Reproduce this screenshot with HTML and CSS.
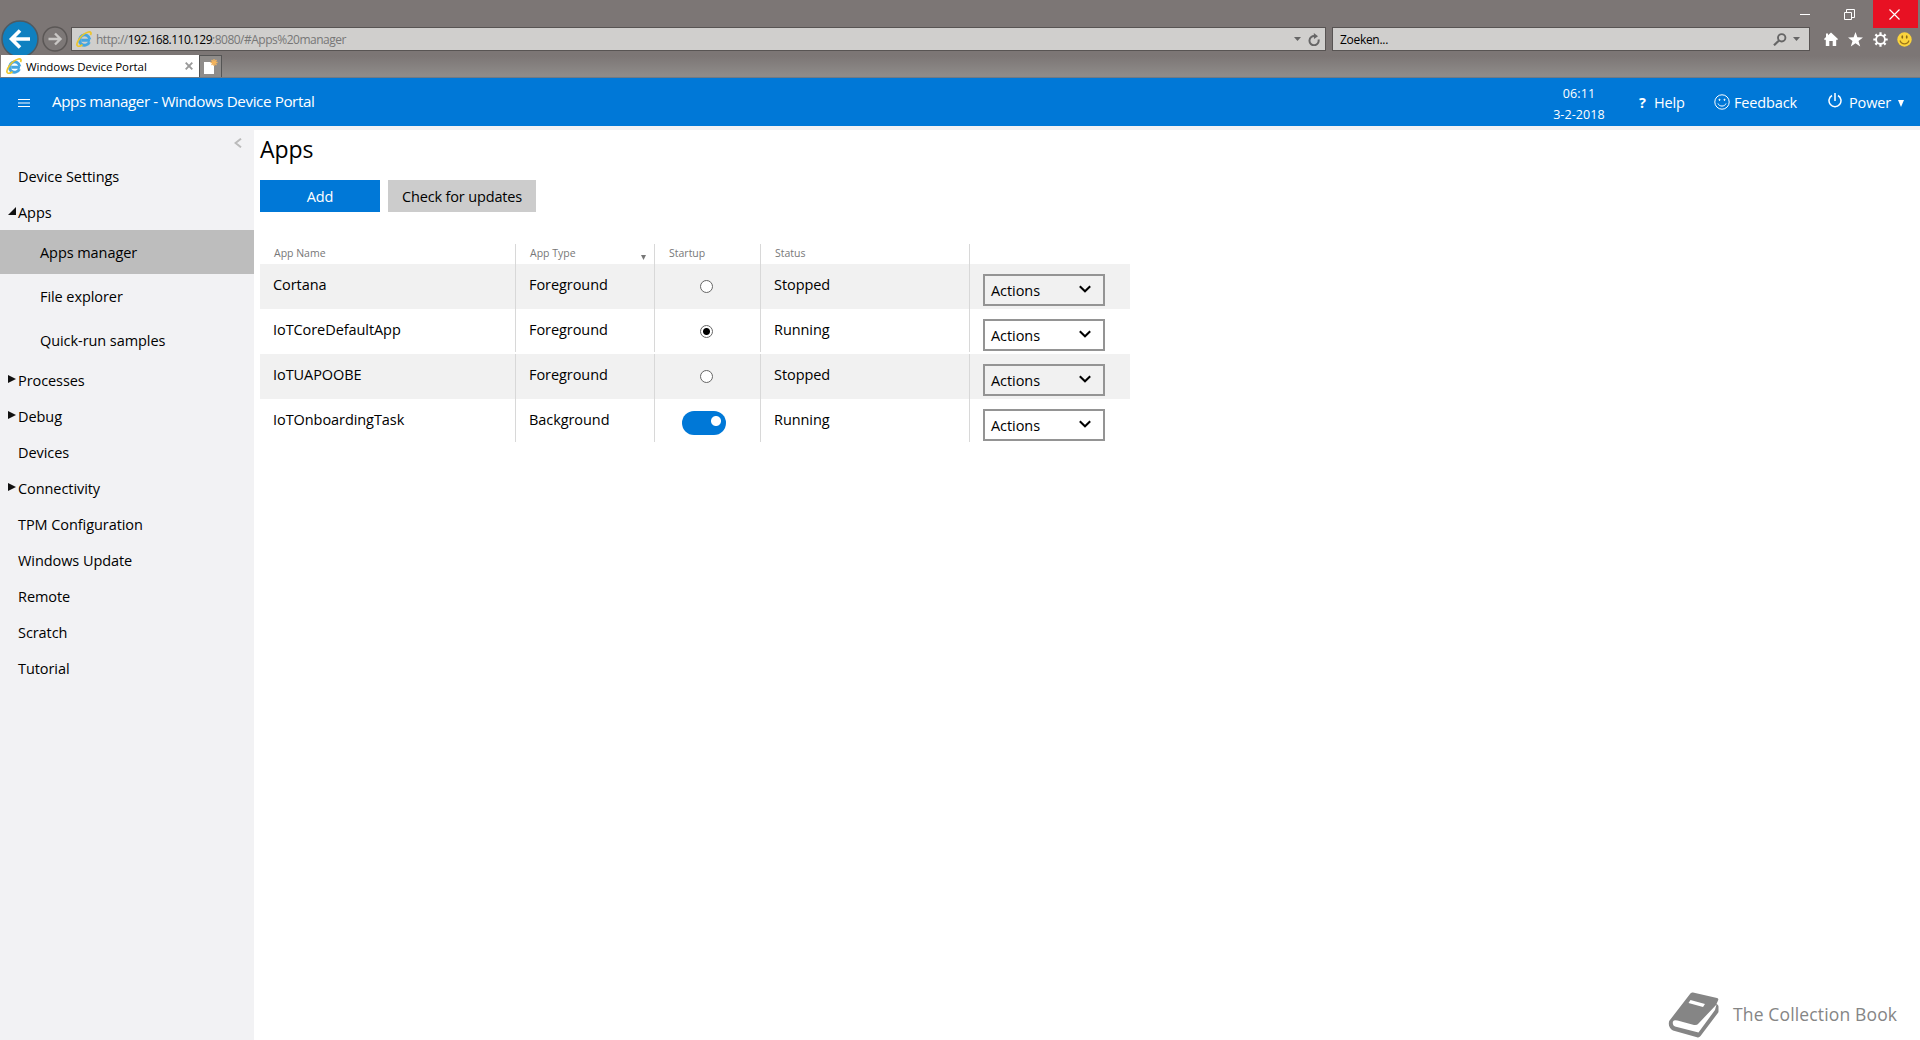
FILE: index.html
```html
<!DOCTYPE html>
<html lang="en">
<head>
  <meta charset="UTF-8">
  <title>Windows Device Portal</title>
  <link rel="stylesheet" href="styles.css">
</head>
<body>

  <!-- shared icons -->
  <svg class="defs" width="0" height="0">
    <symbol id="ie" viewBox="0 0 16 16">
      <path d="M14 9.200H5.200M13.400 11.200A5.200 5.200 0 1 1 13.800 8.400" fill="none" stroke="#45a6e0" stroke-width="2.900"/>
      <path d="M1.500 14.800C-1 12 6 2.600 12.500 1c2.600-.6 3 1.200 2 3M1.500 14.800c1.200 1 3.500.1 5-1" fill="none" stroke="#ecc52c" stroke-width="1.700"/>
    </symbol>
    <symbol id="chevron" viewBox="0 0 12 8">
      <path d="M.8 1.200L6 6.300l5.200-5.100" fill="none" stroke="#000" stroke-width="2"/>
    </symbol>
  </svg>

  <div class="browser">
    <div class="window-row">
      <div class="win-btn">
        <svg width="10" height="10"><path d="M0 5.500h10" stroke="#fff"/></svg>
      </div>
      <div class="win-btn">
        <svg width="11" height="11"><path d="M.5 3.500h7v7h-7zM2.500 3.500v-3h8v8h-3" fill="none" stroke="#fff"/></svg>
      </div>
      <div class="win-btn close">
        <svg width="11" height="11"><path d="M.5.5l10 10M10.500.5l-10 10" stroke="#fff" stroke-width="1.200"/></svg>
      </div>
    </div>

    <div class="nav-row">
      <svg class="back" width="38" height="38" viewBox="0 0 38 38">
        <circle cx="19" cy="19" r="18" fill="#0f80c0" stroke="#4e5a62" stroke-width="1.500"/>
        <path d="M29 19H11M19 10.500L10.500 19l8.500 8.500" fill="none" stroke="#fff" stroke-width="3.600"/>
      </svg>
      <svg class="forward" width="26" height="26" viewBox="0 0 26 26">
        <circle cx="13" cy="13" r="12" fill="#7d7877" stroke="#5b5756" stroke-width="1.500"/>
        <path d="M6.500 13h12M13 7.500l5.500 5.500-5.500 5.500" fill="none" stroke="#c9c7c5" stroke-width="2.400"/>
      </svg>
      <div class="address">
        <svg width="16" height="16"><use href="#ie"/></svg>
        <span class="url">http://<b>192.168.110.129</b>:8080/#Apps%20manager</span>
        <svg class="drop" width="7" height="4"><path d="M0 0h7L3.500 4z" fill="#666"/></svg>
        <svg class="reload" width="12" height="13" viewBox="0 0 12 13"><path d="M10.500 6.500A4.600 4.600 0 1 1 7 3.200" fill="none" stroke="#666" stroke-width="2"/><path d="M5.800 0L10 3.200 6 6z" fill="#666"/></svg>
      </div>
      <div class="search">
        <span>Zoeken...</span>
        <svg width="14" height="13" viewBox="0 0 14 13"><circle cx="8.700" cy="4.800" r="3.700" fill="none" stroke="#666" stroke-width="1.900"/><path d="M6 7.500L1 12.300" stroke="#666" stroke-width="2.200"/></svg>
        <svg class="drop" width="7" height="4"><path d="M0 0h7L3.500 4z" fill="#666"/></svg>
      </div>
      <div class="tools">
        <svg width="14" height="14" viewBox="0 0 14 14"><path d="M7 .5L14 7l-1 1.200-.8-.7V14H8.700V9H5.300v5H1.800V7.500l-.8.7L0 7l2-2V1.500h2v1.800z" fill="#fff"/></svg>
        <svg width="15" height="15" viewBox="0 0 15 15"><path d="M7.500 0l1.900 5.300 5.600.1-4.500 3.500 1.700 5.600-4.700-3.300-4.700 3.300 1.700-5.600L0 5.400l5.600-.1z" fill="#fff"/></svg>
        <svg width="15" height="15" viewBox="0 0 15 15"><circle cx="7.500" cy="7.500" r="4.400" fill="none" stroke="#fff" stroke-width="1.800"/><g stroke="#fff" stroke-width="2.200"><path d="M7.500.3v2.700M7.500 12v2.700M.3 7.500h2.700M12 7.500h2.700M2.400 2.400l1.900 1.900M10.700 10.700l1.900 1.900M2.400 12.600l1.900-1.900M10.700 4.300l1.900-1.900"/></g></svg>
        <svg width="15" height="15" viewBox="0 0 15 15"><circle cx="7.500" cy="7.500" r="7.200" fill="#fbd43c"/><ellipse cx="5.300" cy="5" rx=".9" ry="1.800" fill="#8a6a18"/><ellipse cx="9.700" cy="5" rx=".9" ry="1.800" fill="#8a6a18"/><path d="M3 8.500c1.500 4.500 7.500 4.500 9 0" fill="none" stroke="#9a741a" stroke-width="1.200"/></svg>
      </div>
    </div>

    <div class="tab-row">
      <div class="tab">
        <svg width="16" height="16"><use href="#ie"/></svg>
        <span>Windows Device Portal</span>
        <svg class="tab-close" width="8" height="8"><path d="M.7.7l6.600 6.600M7.300.7L.7 7.300" stroke="#999" stroke-width="1.900"/></svg>
      </div>
      <div class="new-tab">
        <svg width="14" height="16" viewBox="0 0 14 16"><path d="M0 3h7l3 3v9H0z" fill="#fff"/><path d="M10 0v7M6.500 3.500h7M7.500 1l5 5M12.500 1l-5 5" stroke="#f3b35c" stroke-width="1.300"/></svg>
      </div>
    </div>
  </div>

  <div class="topbar">
    <svg class="menu" width="12" height="8"><path d="M0 .5h12M0 4h12M0 7.500h12" stroke="#fff"/></svg>
    <span class="title">Apps manager - Windows Device Portal</span>
    <div class="clock">06:11<br>3-2-2018</div>
    <div class="link help"><b>?</b><span>Help</span></div>
    <div class="link feedback">
      <svg width="16" height="16" viewBox="0 0 16 16" fill="none" stroke="#fff"><circle cx="8" cy="8" r="7.200"/><path d="M4 9.500c1.200 3.400 6.800 3.400 8 0"/><circle cx="5.500" cy="5.800" r=".6" fill="#fff"/><circle cx="10.500" cy="5.800" r=".6" fill="#fff"/></svg>
      <span>Feedback</span>
    </div>
    <div class="link power">
      <svg width="14" height="15" viewBox="0 0 14 15" fill="none" stroke="#fff" stroke-width="1.500"><path d="M4 2.500a6 6 0 1 0 6 0M7 0v8"/></svg>
      <span>Power</span>
      <svg class="caret" width="6" height="7"><path d="M0 0h6L3 7z" fill="#fff"/></svg>
    </div>
  </div>

  <div class="main">
    <div class="sidebar">
      <div class="collapse">
        <svg width="8" height="10"><path d="M7 .7L1.500 5 7 9.300" fill="none" stroke="#bbb" stroke-width="2"/></svg>
      </div>
      <div class="item">Device Settings</div>
      <div class="item open">Apps</div>
      <div class="item sub selected">Apps manager</div>
      <div class="item sub">File explorer</div>
      <div class="item sub">Quick-run samples</div>
      <div class="item closed">Processes</div>
      <div class="item closed">Debug</div>
      <div class="item">Devices</div>
      <div class="item closed">Connectivity</div>
      <div class="item">TPM Configuration</div>
      <div class="item">Windows Update</div>
      <div class="item">Remote</div>
      <div class="item">Scratch</div>
      <div class="item">Tutorial</div>
    </div>

    <div class="content">
      <h1>Apps</h1>
      <div class="buttons">
        <button class="btn primary">Add</button>
        <button class="btn">Check for updates</button>
      </div>

      <div class="table">
        <div class="row head">
          <div>App Name</div>
          <div>App Type <svg class="sort" width="5" height="5"><path d="M0 0h5L2.500 5z" fill="#777"/></svg></div>
          <div>Startup</div>
          <div>Status</div>
          <div></div>
        </div>
        <div class="row">
          <div>Cortana</div>
          <div>Foreground</div>
          <div class="startup"><span class="radio"></span></div>
          <div>Stopped</div>
          <div><div class="select">Actions <svg width="12" height="8"><use href="#chevron"/></svg></div></div>
        </div>
        <div class="row">
          <div>IoTCoreDefaultApp</div>
          <div>Foreground</div>
          <div class="startup"><span class="radio checked"></span></div>
          <div>Running</div>
          <div><div class="select">Actions <svg width="12" height="8"><use href="#chevron"/></svg></div></div>
        </div>
        <div class="row">
          <div>IoTUAPOOBE</div>
          <div>Foreground</div>
          <div class="startup"><span class="radio"></span></div>
          <div>Stopped</div>
          <div><div class="select">Actions <svg width="12" height="8"><use href="#chevron"/></svg></div></div>
        </div>
        <div class="row">
          <div>IoTOnboardingTask</div>
          <div>Background</div>
          <div class="startup"><span class="toggle"></span></div>
          <div>Running</div>
          <div><div class="select">Actions <svg width="12" height="8"><use href="#chevron"/></svg></div></div>
        </div>
      </div>
    </div>
  </div>

  <div class="watermark">
    <svg width="52" height="48" viewBox="0 0 52 48">
      <path d="M22 4q1-2 3-1.500L49 8q2 .7 1 2.500l-1.500 3.500q2 .5 2 2.500v5q0 1-1 2L32.500 46q-1.500 2-3.500 1.200L5 40.500Q-.5 37 1.200 31z" fill="#858585"/>
      <path d="M5 31.500q1-2 4.500-1L26 35q3 .5 4.500-1.500L48.500 14.500 47 20 30.500 42.500 7 36.500Q4 35 5 31.500z" fill="#fff"/>
      <path d="M22.500 10l14.500 4-2 3L20.500 13z" fill="#fff"/>
    </svg>
    <span>The Collection Book</span>
  </div>

</body>
</html>
```
FILE: styles.css
```css
* {
  box-sizing: border-box;
}
body {
  margin: 0;
  height: 1040px;
  overflow: hidden;
  display: flex;
  flex-direction: column;
  font-family: "Open Sans", "Noto Sans", sans-serif;
  font-size: 14.5px;
  letter-spacing: -0.07px;
  color: #000;
  background-color: #fff;
}
svg {
  display: block;
  flex: none;
}
.defs {
  position: absolute;
}

/* browser frame */
.browser {
  height: 78px;
  flex: none;
  background: linear-gradient(#7c7675 0, #7c7675 56px, #8e8b89 75px, #8e8b89 77px, #6f7a86 77px);
  font-size: 12px;
}
.window-row {
  display: flex;
  justify-content: flex-end;
  height: 28px;
  padding-right: 2px;
}
.win-btn {
  width: 45px;
  height: 28px;
  padding-right: 2px;
  display: flex;
  align-items: center;
  justify-content: center;
}
.close {
  background-color: #e81123;
}
.nav-row {
  display: flex;
  height: 24px;
  margin-top: -1px;
  align-items: center;
}
.back {
  margin-left: 1px;
}
.forward {
  margin: 0 3px 0 3px;
}
.address, .search {
  height: 24px;
  display: flex;
  align-items: center;
  background-color: #d0cfcd;
  border: 1px solid #585453;
}
.address {
  width: 1255px;
  padding: 0 5px 0 4px;
}
.url {
  margin-left: 4px;
  flex: 1;
  color: #777;
  letter-spacing: -0.5px;
}
.url b {
  font-weight: normal;
  color: #000;
}
.reload {
  margin-left: 7px;
}
.search {
  width: 478px;
  margin-left: 6px;
  padding: 0 9px 0 7px;
}
.search span {
  flex: 1;
  letter-spacing: -0.3px;
}
.search .drop {
  margin-left: 6px;
}
.tools {
  display: flex;
  align-items: center;
  gap: 10px;
  margin-left: 14px;
}
.tools svg:last-child {
  margin-left: -1px;
}
.tab-row {
  display: flex;
  margin-top: 4px;
  height: 22px;
}
.tab {
  display: flex;
  align-items: center;
  width: 198px;
  margin-left: 1px;
  padding: 0 6px 0 5px;
  background-color: #fff;
  font-size: 11.5px;
}
.tab span {
  flex: 1;
  margin-left: 4px;
}
.new-tab {
  display: flex;
  align-items: center;
  width: 23px;
  padding-left: 4px;
  background-color: #8f8c8a;
  border: 1px solid #555;
  border-bottom: none;
}

/* portal header */
.topbar {
  display: flex;
  height: 48px;
  flex: none;
  background-color: #0078d7;
  color: #fff;
}
.menu {
  margin: 21px 22px 0 18px;
}
.title {
  flex: 1;
  font-size: 15.2px;
  letter-spacing: -0.4px;
  line-height: 46px;
}
.clock {
  width: 80px;
  padding-top: 5px;
  margin-right: 20px;
  font-size: 12.5px;
  letter-spacing: 0.1px;
  line-height: 21px;
  text-align: center;
}
.link {
  display: flex;
  line-height: 49px;
  letter-spacing: -0.15px;
}
.help {
  width: 75px;
}
.help b {
  width: 15px;
}
.feedback {
  width: 114px;
}
.feedback svg {
  margin: 16px 4px 0 0;
}
.power {
  width: 92px;
  line-height: 50px;
}
.power svg {
  margin: 15px 7px 0 0;
}
.power .caret {
  margin: 22px 0 0 7px;
}

/* side menu */
.main {
  display: flex;
  flex: 1;
  border-top: 4px solid #f2f2f4;
}
.sidebar {
  width: 254px;
  flex: none;
  background-color: #f2f2f4;
}
.collapse {
  height: 28px;
  padding: 8px 0 0 234px;
}
.item {
  display: flex;
  align-items: center;
  height: 36px;
  padding-left: 18px;
}
.sub {
  height: 44px;
  padding-left: 40px;
}
.selected {
  background-color: #bdbdbd;
}
.open, .closed {
  padding-left: 8px;
}
.open::before, .closed::before {
  content: "";
  width: 8px;
  height: 8px;
  margin: -2px 2px 0 0;
  background-color: #111;
  clip-path: polygon(0 0, 100% 50%, 0 100%);
}
.open::before {
  clip-path: polygon(100% 0, 100% 100%, 0 100%);
}

/* apps page */
.content {
  padding: 2px 0 0 6px;
}
h1 {
  margin: 0;
  font-size: 23px;
  font-weight: normal;
  line-height: 35px;
}
.buttons {
  display: flex;
  gap: 8px;
  margin: 13px 0 32px;
}
.btn {
  width: 148px;
  height: 32px;
  padding: 0;
  border: none;
  font: inherit;
  letter-spacing: -0.15px;
  background-color: #ccc;
}
.primary {
  width: 120px;
  color: #fff;
  background-color: #0078d7;
}
.row {
  display: grid;
  grid-template-columns: 256px 139px 106px 209px 160px;
  height: 45px;
  line-height: 41px;
}
.row:nth-child(even) {
  background-color: #f1f1f1;
}
.row > div {
  height: 43px;
  padding-left: 13px;
  border-right: 1px solid #d8d8d8;
}
.row:nth-child(even) > div {
  height: 45px;
}
.row > div:last-child {
  border-right: none;
}
.head {
  height: 20px;
  font-size: 10.5px;
  line-height: 18px;
  letter-spacing: 0;
  color: #777;
}
.head > div {
  display: flex;
  height: 20px;
  padding-left: 14px;
}
.sort {
  margin: 11px 8px 0 auto;
}
.row > .startup {
  display: flex;
  justify-content: center;
  padding: 16px 0 0;
}
.radio {
  width: 13px;
  height: 13px;
  margin-left: -3px;
  border: 1px solid #666;
  border-radius: 50%;
  background-color: #fff;
}
.checked {
  background: radial-gradient(circle, #000 3px, #fff 4px);
}
.toggle {
  width: 44px;
  height: 24px;
  margin: -4px 7px 0 0;
  border-radius: 12px;
  background: radial-gradient(circle at 34px 10px, #fff 4.5px, #0078d7 5.5px);
}
.select {
  display: flex;
  align-items: center;
  justify-content: space-between;
  width: 122px;
  height: 32px;
  margin-top: 10px;
  padding: 0 12px 0 6px;
  border: 2px solid #949494;
}
.select svg {
  margin-top: -2px;
}

/* logo in the corner */
.watermark {
  position: absolute;
  left: 1668px;
  top: 990px;
  display: flex;
  align-items: center;
  gap: 13px;
  font-size: 17.5px;
  letter-spacing: 0.15px;
  color: #858585;
}
```
